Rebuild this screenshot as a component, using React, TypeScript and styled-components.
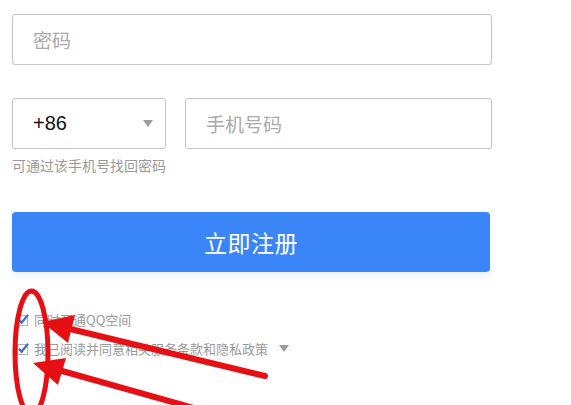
import React from 'react';
import styled, { createGlobalStyle } from 'styled-components';

const GlobalStyle = createGlobalStyle`
  html, body {
    margin: 0;
    padding: 0;
    background: #fff;
  }
  body {
    font-family: 'Noto Sans CJK SC', 'Liberation Sans', sans-serif;
  }
`;

const Page = styled.div`
  position: relative;
  width: 571px;
  height: 405px;
  overflow: hidden;
  background: #fff;
`;

const Form = styled.div`
  display: flex;
  flex-direction: column;
  padding: 14px 0 0 12px;
  width: 480px;
`;

const Field = styled.div<{ width?: number; grow?: boolean }>`
  box-sizing: border-box;
  height: 51px;
  width: ${props => (props.width ? `${props.width}px` : '100%')};
  flex: ${props => (props.grow ? '1 1 auto' : 'none')};
  border: 1px solid #c4c4c4;
  border-radius: 3px;
  display: flex;
  align-items: center;
  padding: 0 12px 0 20px;
`;

const Placeholder = styled.span`
  font-size: 19px;
  color: #aaa;
  line-height: 1;
  padding-bottom: 1px;
`;

const CountryCode = styled.span`
  font-family: 'Liberation Sans', Arial, sans-serif;
  font-size: 20px;
  color: #111;
  flex: 1;
`;

const Caret = styled.span<{ size?: number; gapLeft?: number }>`
  width: 0;
  height: 0;
  margin-left: ${props => props.gapLeft || 0}px;
  border-left: ${props => props.size || 5}px solid transparent;
  border-right: ${props => props.size || 5}px solid transparent;
  border-top: ${props => Math.round((props.size || 5) * 1.3)}px solid #9a9a9a;
`;

const PhoneRow = styled.div`
  display: flex;
  gap: 19px;
  margin-top: 33px;
`;

const Hint = styled.div`
  font-size: 14px;
  color: #999;
  line-height: 16px;
  margin-top: 8px;
`;

const SubmitButton = styled.button`
  margin-top: 39px;
  width: 478px;
  height: 60px;
  border: none;
  border-radius: 4px;
  background: #3a86f8;
  color: #fff;
  font-family: 'Noto Sans CJK SC', sans-serif;
  font-size: 23px;
  letter-spacing: 0.5px;
  box-shadow: 0 4px 8px rgba(58, 134, 248, 0.12);
  cursor: pointer;
`;

const Agreements = styled.div`
  display: flex;
  flex-direction: column;
  gap: 12px;
  margin-top: 39px;
  padding-left: 4px;
`;

const CheckRow = styled.label`
  display: flex;
  align-items: center;
  gap: 5px;
  font-size: 13px;
  color: #999;
  line-height: 17px;
`;

const CheckBox = () => (
  <svg width="13" height="13" viewBox="0 0 13 13">
    <rect x="1.5" y="2.5" width="10" height="10" fill="#fff" stroke="#b5b5b5" />
    <path d="M3 6.8 L5.6 9.8 L12 1.8" fill="none" stroke="#3b6fc6" strokeWidth="2.2" />
  </svg>
);

const Annotation = styled.svg`
  position: absolute;
  left: 0;
  top: 0;
  pointer-events: none;
`;

export default function App() {
  return (
    <Page>
      <GlobalStyle />
      <Form>
        <Field>
          <Placeholder>密码</Placeholder>
        </Field>
        <PhoneRow>
          <Field width={154}>
            <CountryCode>+86</CountryCode>
            <Caret />
          </Field>
          <Field grow>
            <Placeholder>手机号码</Placeholder>
          </Field>
        </PhoneRow>
        <Hint>可通过该手机号找回密码</Hint>
        <SubmitButton>立即注册</SubmitButton>
        <Agreements>
          <CheckRow>
            <CheckBox />
            同时开通QQ空间
          </CheckRow>
          <CheckRow>
            <CheckBox />
            我已阅读并同意相关服务条款和隐私政策
            <Caret size={5} gapLeft={6} />
          </CheckRow>
        </Agreements>
      </Form>
      <Annotation width="571" height="405" viewBox="0 0 571 405">
        <ellipse cx="31.5" cy="353" rx="16.5" ry="62" fill="none" stroke="#e50f14" strokeWidth="5" />
        <line x1="62" y1="327" x2="265" y2="376" stroke="#e50f14" strokeWidth="6" strokeLinecap="round" />
        <polygon points="42,322 75,315 68,343" fill="#e50f14" />
        <line x1="55" y1="369" x2="215" y2="414" stroke="#e50f14" strokeWidth="6" strokeLinecap="round" />
        <polygon points="33,363 66,358 58,385" fill="#e50f14" />
      </Annotation>
    </Page>
  );
}
